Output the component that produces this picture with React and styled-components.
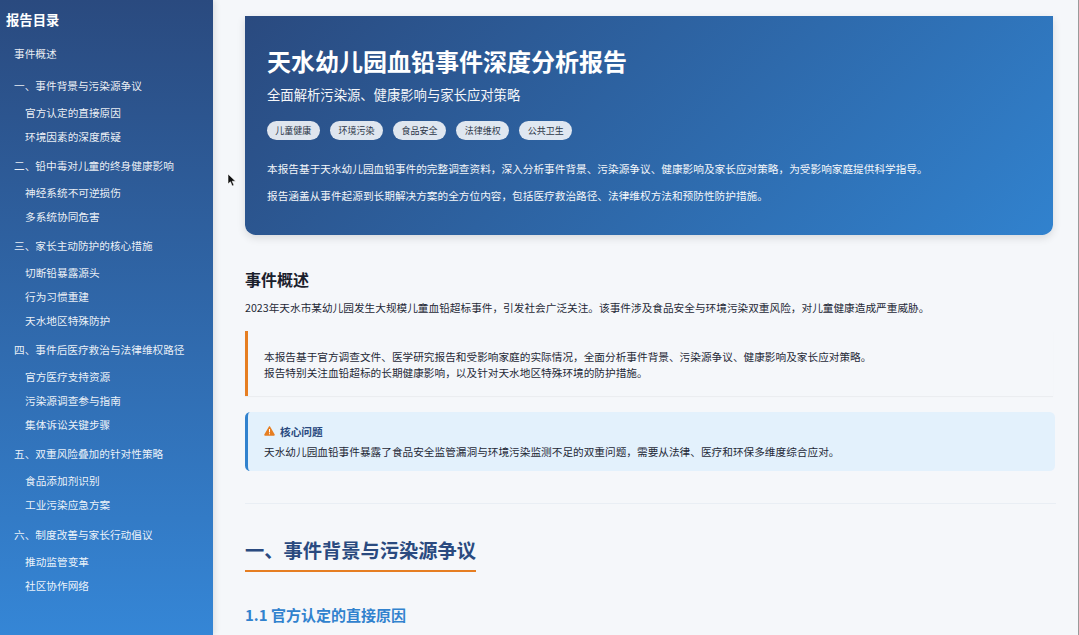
import React from "react";
import styled, { createGlobalStyle } from "styled-components";

const Global = createGlobalStyle`
  html, body { margin: 0; padding: 0; height: 100%; overflow: hidden; }
  body { background: #f5f7fa; font-family: "Noto Sans CJK SC", "Noto Sans", sans-serif; }
  #root { height: 100%; }
  * { box-sizing: border-box; }
`;

const Page = styled.div`
  display: flex; width: 1079px; height: 635px; overflow: hidden; position: relative;
`;
const Sidebar = styled.aside`
  width: 213px; flex: none; height: 635px; padding: 11px 6px 0; color: #fff;
  background: linear-gradient(180deg, #2a4a7f 0%, #3586d6 100%);
  box-shadow: 2px 0 6px rgba(0,0,0,.1);
`;
const SideTitle = styled.div`
  font-size: 13.33px; font-weight: 700; line-height: 18px; margin-bottom: 16.5px;
`;
const SideList = styled.nav`display: flex; flex-direction: column; padding-left: 8px;`;
const SideItem = styled.div`
  font-size: 10.67px; line-height: 16px; color: rgba(255,255,255,.92);
  padding-left: ${p => (p.$sub ? "11px" : "0")};
  margin-top: ${p => (p.$sub ? "8px" : "13.2px")};
  margin-bottom: ${p => (p.$sub ? "0" : "3px")};
  white-space: nowrap;
  &:first-child { margin-top: 0; }
`;
const Main = styled.main`
  flex: 1; min-width: 0; padding: 16px 25px 0 32px; border-right: 1px solid #9a9a9a;
`;
const Hero = styled.header`
  height: 219px; padding: 28px 22px 0; color: #fff; border-radius: 0 0 10.67px 10.67px;
  background: linear-gradient(135deg, #2a4a7f 0%, #3182ce 100%);
  box-shadow: 0 3px 8px rgba(0,0,0,.12);
`;
const HeroTitle = styled.h1`
  margin: 0; font-size: 24px; font-weight: 700; line-height: 33px;
`;
const HeroSub = styled.div`font-size: 13.33px; line-height: 20px; margin-top: 8px; opacity: .95;`;
const Tags = styled.div`display: flex; gap: 10.5px; margin-top: 15.5px;`;
const Tag = styled.span`
  height: 19px; padding: 0 8.3px; border-radius: 10px; background: rgba(255,255,255,.85);
  color: #2d3748; font-size: 9px; line-height: 19px; white-space: nowrap;
`;
const HeroText = styled.p`
  margin: ${p => (p.$first ? "21px" : "11px")} 0 0; font-size: 10.67px; line-height: 16px; opacity: .95; white-space: nowrap;
`;
const H2 = styled.h2`
  margin: 32px 0 0; font-size: 16px; font-weight: 700; line-height: 24px; color: #1a202c;
`;
const Para = styled.p`
  margin: 8px 0 0; font-size: 10.67px; line-height: 18px; color: #1f2937; white-space: nowrap;
`;
const Quote = styled.div`
  margin-top: 14px; height: 65px; padding: 18px 16px 0; border-left: 3px solid #e67e22;
  font-size: 10.67px; line-height: 16px; color: #1f2937; white-space: nowrap;
  box-shadow: 0 1px 1px rgba(0,0,0,.04);
`;
const Callout = styled.div`
  margin: 16px -2px 0 0; height: 59px; padding: 11px 16px 0; border-left: 3px solid #3182ce;
  border-radius: 5.33px; background: #e3f1fc;
`;
const CalloutHead = styled.div`
  display: flex; align-items: center; gap: 5px; height: 16px; font-size: 10.67px; font-weight: 700; color: #2a4a7f;
`;
const CalloutText = styled.div`
  margin-top: 4px; font-size: 10.67px; line-height: 18px; color: #1f2937; white-space: nowrap;
`;
const Rule = styled.hr`margin: 32px -3px 0 0; border: 0; border-top: 1px solid #e9eef4;`;
const H1Wrap = styled.div`margin-top: 33px; display: flex;`;
const SectionTitle = styled.h2`
  margin: 0; font-size: 19.25px; font-weight: 700; line-height: 27px; color: #2a4a7f;
  padding-bottom: 6px; border-bottom: 2.67px solid #e67e22;
`;
const H3 = styled.h3`
  margin: 33px 0 0; font-size: 15px; font-weight: 700; line-height: 20px; color: #3182ce;
`;
const Cursor = styled.svg`position: absolute; left: 227px; top: 173px;`;

const nav = [
  ["事件概述"],
  ["一、事件背景与污染源争议"], ["官方认定的直接原因", 1], ["环境因素的深度质疑", 1],
  ["二、铅中毒对儿童的终身健康影响"], ["神经系统不可逆损伤", 1], ["多系统协同危害", 1],
  ["三、家长主动防护的核心措施"], ["切断铅暴露源头", 1], ["行为习惯重建", 1], ["天水地区特殊防护", 1],
  ["四、事件后医疗救治与法律维权路径"], ["官方医疗支持资源", 1], ["污染源调查参与指南", 1], ["集体诉讼关键步骤", 1],
  ["五、双重风险叠加的针对性策略"], ["食品添加剂识别", 1], ["工业污染应急方案", 1],
  ["六、制度改善与家长行动倡议"], ["推动监管变革", 1], ["社区协作网络", 1],
];
const tags = ["儿童健康", "环境污染", "食品安全", "法律维权", "公共卫生"];

export default function App() {
  return (
    <Page>
      <Global />
      <Sidebar>
        <SideTitle>报告目录</SideTitle>
        <SideList>
          {nav.map(([t, s]) => <SideItem key={t} $sub={s}>{t}</SideItem>)}
        </SideList>
      </Sidebar>
      <Main>
        <Hero>
          <HeroTitle>天水幼儿园血铅事件深度分析报告</HeroTitle>
          <HeroSub>全面解析污染源、健康影响与家长应对策略</HeroSub>
          <Tags>{tags.map(t => <Tag key={t}>{t}</Tag>)}</Tags>
          <HeroText $first>本报告基于天水幼儿园血铅事件的完整调查资料，深入分析事件背景、污染源争议、健康影响及家长应对策略，为受影响家庭提供科学指导。</HeroText>
          <HeroText>报告涵盖从事件起源到长期解决方案的全方位内容，包括医疗救治路径、法律维权方法和预防性防护措施。</HeroText>
        </Hero>
        <H2>事件概述</H2>
        <Para>2023年天水市某幼儿园发生大规模儿童血铅超标事件，引发社会广泛关注。该事件涉及食品安全与环境污染双重风险，对儿童健康造成严重威胁。</Para>
        <Quote>
          本报告基于官方调查文件、医学研究报告和受影响家庭的实际情况，全面分析事件背景、污染源争议、健康影响及家长应对策略。<br />
          报告特别关注血铅超标的长期健康影响，以及针对天水地区特殊环境的防护措施。
        </Quote>
        <Callout>
          <CalloutHead>
            <svg width="11" height="10" viewBox="0 0 11 10">
              <path d="M5.5.3c.3 0 .5.1.7.4l4.5 7.8c.3.6-.1 1.2-.7 1.2H1c-.6 0-1-.6-.7-1.2L4.8.7c.2-.3.4-.4.7-.4z" fill="#e67e22" />
              <rect x="5" y="3" width="1" height="3.4" fill="#fff" />
              <rect x="5" y="7.2" width="1" height="1.1" fill="#fff" />
            </svg>
            核心问题
          </CalloutHead>
          <CalloutText>天水幼儿园血铅事件暴露了食品安全监管漏洞与环境污染监测不足的双重问题，需要从法律、医疗和环保多维度综合应对。</CalloutText>
        </Callout>
        <Rule />
        <H1Wrap><SectionTitle>一、事件背景与污染源争议</SectionTitle></H1Wrap>
        <H3>1.1 官方认定的直接原因</H3>
      </Main>
      <Cursor width="10" height="14" viewBox="0 0 10 14">
        <path d="M1 1v10l2.4-2.2L5.2 13l1.8-.8-1.8-4H8.6z" fill="#111" stroke="#fff" strokeWidth=".6" />
      </Cursor>
    </Page>
  );
}
